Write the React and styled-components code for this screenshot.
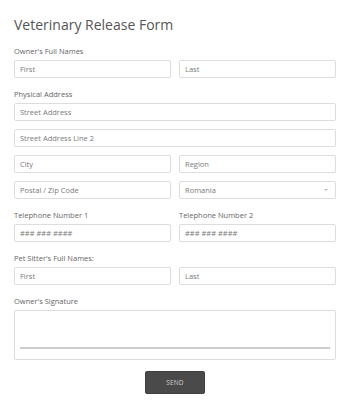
import React from "react";
import styled, { createGlobalStyle } from "styled-components";

const GlobalStyle = createGlobalStyle`
  body {
    margin: 0;
    background: #fff;
    font-family: "Open Sans", "Liberation Sans", sans-serif;
  }
`;

const Form = styled.form`
  width: 322px;
  padding: 0 14px;
`;

const Title = styled.h1`
  margin: 0;
  padding-top: 15px;
  height: 46px;
  box-sizing: border-box;
  font-size: 14px;
  line-height: 20px;
  font-weight: 400;
  color: #555;
`;

const Group = styled.div`
  margin-bottom: 11px;
`;

const Label = styled.div`
  font-size: 7.5px;
  line-height: 11px;
  color: #666;
  margin-bottom: 3px;
`;

const Rows = styled.div`
  display: flex;
  flex-direction: column;
  gap: 8px;
`;

const Row = styled.div`
  display: grid;
  grid-template-columns: ${(p) => (p.$single ? "1fr" : "1fr 1fr")};
  gap: 8px;
`;

const Cols = styled.div`
  display: grid;
  grid-template-columns: 1fr 1fr;
  gap: 8px;
`;

const Input = styled.div`
  position: relative;
  height: 18px;
  box-sizing: border-box;
  border: 1px solid #ddd;
  border-radius: 2px;
  padding: 0 5px;
  font-size: 7.5px;
  line-height: 16px;
  color: #7a7a7a;
`;

const Caret = styled.span`
  position: absolute;
  right: 7px;
  top: 7px;
  width: 0;
  height: 0;
  border-left: 2px solid transparent;
  border-right: 2px solid transparent;
  border-top: 2.5px solid #bbb;
`;

const Signature = styled.div`
  height: 50px;
  box-sizing: border-box;
  border: 1px solid #ddd;
  border-radius: 2px;
  padding: 36px 5px 0;
`;

const SignLine = styled.div`
  height: 1.5px;
  background: #ccc;
`;

const Actions = styled.div`
  display: flex;
  justify-content: center;
`;

const Button = styled.button`
  width: 60px;
  height: 23px;
  background: #4a4a4a;
  border: 1px solid #3f3f3f;
  border-radius: 2px;
  color: #cfcfcf;
  font-family: "Open Sans", "Liberation Sans", sans-serif;
  font-size: 6.5px;
  letter-spacing: 0.2px;
  padding: 0;
`;

const Field = ({ children, select }) => (
  <Input>
    {children}
    {select && <Caret />}
  </Input>
);

export default function App() {
  return (
    <>
      <GlobalStyle />
      <Form>
        <Title>Veterinary Release Form</Title>

        <Group>
          <Label>Owner's Full Names</Label>
          <Row>
            <Field>First</Field>
            <Field>Last</Field>
          </Row>
        </Group>

        <Group>
          <Label>Physical Address</Label>
          <Rows>
            <Row $single>
              <Field>Street Address</Field>
            </Row>
            <Row $single>
              <Field>Street Address Line 2</Field>
            </Row>
            <Row>
              <Field>City</Field>
              <Field>Region</Field>
            </Row>
            <Row>
              <Field>Postal / Zip Code</Field>
              <Field select>Romania</Field>
            </Row>
          </Rows>
        </Group>

        <Cols>
          <Group>
            <Label>Telephone Number 1</Label>
            <Field>### ### ####</Field>
          </Group>
          <Group>
            <Label>Telephone Number 2</Label>
            <Field>### ### ####</Field>
          </Group>
        </Cols>

        <Group>
          <Label>Pet Sitter's Full Names:</Label>
          <Row>
            <Field>First</Field>
            <Field>Last</Field>
          </Row>
        </Group>

        <Group>
          <Label>Owner's Signature</Label>
          <Signature>
            <SignLine />
          </Signature>
        </Group>

        <Actions>
          <Button type="button">SEND</Button>
        </Actions>
      </Form>
    </>
  );
}
